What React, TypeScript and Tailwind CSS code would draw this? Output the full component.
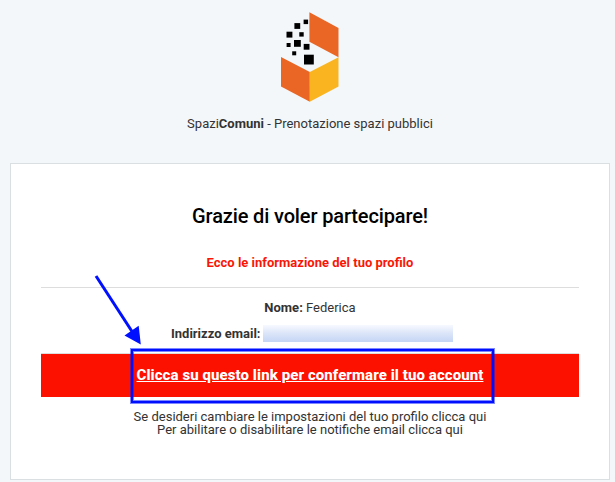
const black = [
  [303.6, 19.6, 4.5], [294.4, 23.1, 5.8], [286.5, 31.7, 5.9], [299.3, 32.2, 4.4], [286.6, 43, 4],
  [294, 40, 6.8], [303.7, 43.9, 5.8], [292.2, 51.3, 4], [304, 54.7, 9.8],
];

function Logo() {
  return (
    <svg className="block" width="60" height="92" viewBox="280 11 60 92" aria-hidden="true">
      <path d="M309.4 12.3 338.5 28V57.2L309.4 41.7Z" fill="#e96624" />
      <path d="M281 57 309.8 72V101.7L281 86.5Z" fill="#e96624" />
      <path d="M309.8 72 338.5 57.2V86.5L309.8 101.7Z" fill="#fab420" />
      {black.map(([x, y, s]) => (
        <rect key={`${x}-${y}`} x={x} y={y} width={s} height={s} fill="#000" />
      ))}
    </svg>
  );
}

export default function App() {
  return (
    <main className="relative h-[482px] w-[615px] overflow-hidden bg-[#f3f7fa] font-['Roboto',sans-serif] text-[13px] leading-[15px] text-[#333]">
      <header className="ml-[10px] flex h-[163px] w-[600px] flex-col items-center pt-[11px]">
        <Logo />
        <p className="mt-[13px] whitespace-nowrap">
          Spazi<strong className="font-bold">Comuni</strong> - Prenotazione spazi pubblici
        </p>
      </header>
      <section className="ml-[10px] h-[317px] w-[600px] border border-[#dadfe1] bg-white px-[30px] pt-[40px] text-center">
        <h1 className="h-6 text-[20px] leading-6 font-medium tracking-[-0.14px] whitespace-nowrap text-black">Grazie di voler partecipare!</h1>
        <h2 className="mt-[27px] h-[15px] font-bold whitespace-nowrap text-[#f91607]">Ecco le informazione del tuo profilo</h2>
        <div className="mt-[17px] h-[67px] border-y border-[#dddddd] pt-[12px]">
          <p className="h-[15px]"><strong className="font-bold">Nome:</strong> Federica</p>
          <div className="mt-[10px] flex h-[17px] items-center gap-[3px] pl-[130px]">
            <strong className="w-[89px] font-bold whitespace-nowrap">Indirizzo email:</strong>
            <span className="h-[17px] w-[190px] bg-linear-to-b from-[#f7f9fe] via-[#dbe5f9] to-[#c5d5f5]" />
          </div>
        </div>
        <div className="flex h-[43px] items-center justify-center bg-[#fc1100]">
          <a className="text-[15px] font-extrabold tracking-[0.08px] whitespace-nowrap text-white underline">Clicca su questo link per confermare il tuo account</a>
        </div>
        <p className="mt-[13px] leading-[13px]">
          Se desideri cambiare le impostazioni del tuo profilo clicca qui<br />
          Per abilitare o disabilitare le notifiche email clicca qui
        </p>
      </section>
      <svg className="absolute top-0 left-0" width="615" height="482" fill="none" aria-hidden="true">
        <path d="M96 276 133 333" stroke="#0010ff" strokeWidth="3" />
        <path d="M140.8 344.5 124.5 335.5 138.7 325.8Z" fill="#0010ff" />
        <rect x="132" y="350" width="361" height="52" stroke="#0010ff" strokeOpacity="0.5" strokeWidth="4" />
        <rect x="132" y="350" width="361" height="52" stroke="#0010ff" strokeWidth="2" />
      </svg>
    </main>
  );
}
